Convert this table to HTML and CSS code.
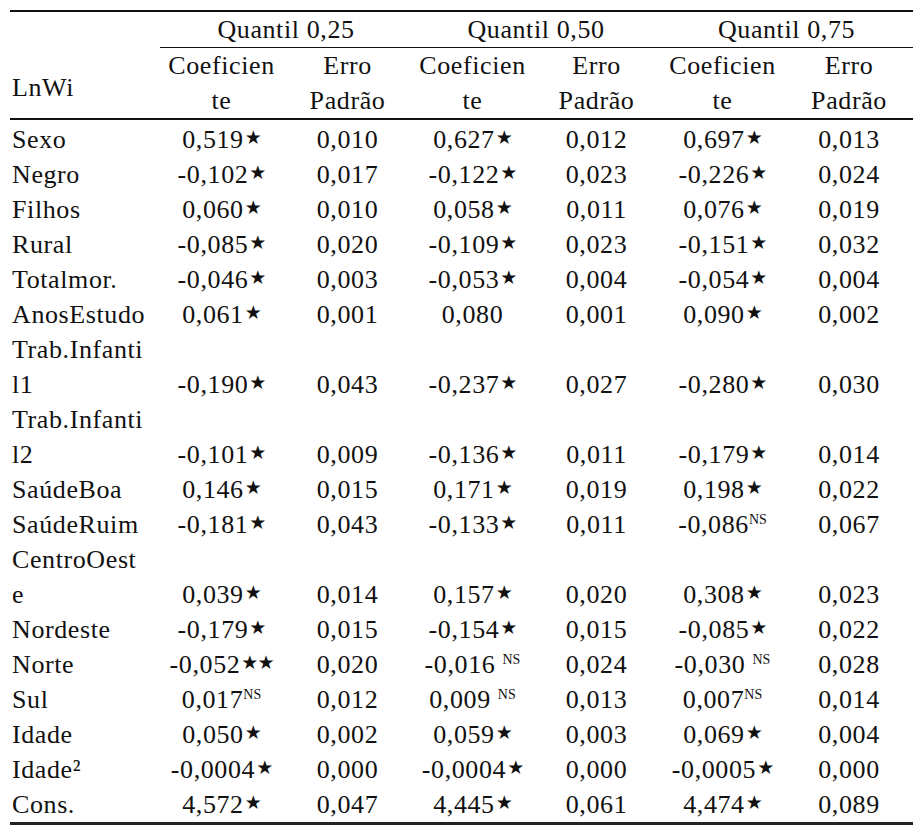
FILE: index.html
```html
<!DOCTYPE html>
<html lang="pt">
<head>
<meta charset="utf-8">
<title>Regressão quantílica</title>
<link rel="stylesheet" href="styles.css">
</head>
<body>
<table class="tbl">
  <colgroup>
    <col class="c-label"><col class="c1"><col class="c2"><col class="c3"><col class="c4"><col class="c5"><col class="c6">
  </colgroup>
  <thead>
    <tr class="h1">
      <th class="blank"></th>
      <th colspan="2" class="q">Quantil 0,25</th>
      <th colspan="2" class="q">Quantil 0,50</th>
      <th colspan="2" class="q">Quantil 0,75</th>
    </tr>
    <tr class="h2">
      <th class="lbl mid">LnWi</th>
      <th>Coeficien<br>te</th>
      <th>Erro<br>Padrão</th>
      <th>Coeficien<br>te</th>
      <th>Erro<br>Padrão</th>
      <th>Coeficien<br>te</th>
      <th>Erro<br>Padrão</th>
    </tr>
  </thead>
  <tbody>
    <tr class="first"><td class="lbl">Sexo</td><td>0,519<span class="st">★</span></td><td>0,010</td><td>0,627<span class="st">★</span></td><td>0,012</td><td>0,697<span class="st">★</span></td><td>0,013</td></tr>
    <tr><td class="lbl">Negro</td><td>-0,102<span class="st">★</span></td><td>0,017</td><td>-0,122<span class="st">★</span></td><td>0,023</td><td>-0,226<span class="st">★</span></td><td>0,024</td></tr>
    <tr><td class="lbl">Filhos</td><td>0,060<span class="st">★</span></td><td>0,010</td><td>0,058<span class="st">★</span></td><td>0,011</td><td>0,076<span class="st">★</span></td><td>0,019</td></tr>
    <tr><td class="lbl">Rural</td><td>-0,085<span class="st">★</span></td><td>0,020</td><td>-0,109<span class="st">★</span></td><td>0,023</td><td>-0,151<span class="st">★</span></td><td>0,032</td></tr>
    <tr><td class="lbl">Totalmor.</td><td>-0,046<span class="st">★</span></td><td>0,003</td><td>-0,053<span class="st">★</span></td><td>0,004</td><td>-0,054<span class="st">★</span></td><td>0,004</td></tr>
    <tr><td class="lbl">AnosEstudo</td><td>0,061<span class="st">★</span></td><td>0,001</td><td>0,080</td><td>0,001</td><td>0,090<span class="st">★</span></td><td>0,002</td></tr>
    <tr><td class="lbl">Trab.Infanti<br>l1</td><td>-0,190<span class="st">★</span></td><td>0,043</td><td>-0,237<span class="st">★</span></td><td>0,027</td><td>-0,280<span class="st">★</span></td><td>0,030</td></tr>
    <tr><td class="lbl">Trab.Infanti<br>l2</td><td>-0,101<span class="st">★</span></td><td>0,009</td><td>-0,136<span class="st">★</span></td><td>0,011</td><td>-0,179<span class="st">★</span></td><td>0,014</td></tr>
    <tr><td class="lbl">SaúdeBoa</td><td>0,146<span class="st">★</span></td><td>0,015</td><td>0,171<span class="st">★</span></td><td>0,019</td><td>0,198<span class="st">★</span></td><td>0,022</td></tr>
    <tr><td class="lbl">SaúdeRuim</td><td>-0,181<span class="st">★</span></td><td>0,043</td><td>-0,133<span class="st">★</span></td><td>0,011</td><td>-0,086<span class="ns">NS</span></td><td>0,067</td></tr>
    <tr><td class="lbl">CentroOest<br>e</td><td>0,039<span class="st">★</span></td><td>0,014</td><td>0,157<span class="st">★</span></td><td>0,020</td><td>0,308<span class="st">★</span></td><td>0,023</td></tr>
    <tr><td class="lbl">Nordeste</td><td>-0,179<span class="st">★</span></td><td>0,015</td><td>-0,154<span class="st">★</span></td><td>0,015</td><td>-0,085<span class="st">★</span></td><td>0,022</td></tr>
    <tr><td class="lbl">Norte</td><td>-0,052<span class="st">★★</span></td><td>0,020</td><td>-0,016 <span class="ns">NS</span></td><td>0,024</td><td>-0,030 <span class="ns">NS</span></td><td>0,028</td></tr>
    <tr><td class="lbl">Sul</td><td>0,017<span class="ns">NS</span></td><td>0,012</td><td>0,009 <span class="ns">NS</span></td><td>0,013</td><td>0,007<span class="ns">NS</span></td><td>0,014</td></tr>
    <tr><td class="lbl">Idade</td><td>0,050<span class="st">★</span></td><td>0,002</td><td>0,059<span class="st">★</span></td><td>0,003</td><td>0,069<span class="st">★</span></td><td>0,004</td></tr>
    <tr><td class="lbl">Idade²</td><td>-0,0004<span class="st">★</span></td><td>0,000</td><td>-0,0004<span class="st">★</span></td><td>0,000</td><td>-0,0005<span class="st">★</span></td><td>0,000</td></tr>
    <tr class="last"><td class="lbl">Cons.</td><td>4,572<span class="st">★</span></td><td>0,047</td><td>4,445<span class="st">★</span></td><td>0,061</td><td>4,474<span class="st">★</span></td><td>0,089</td></tr>
  </tbody>
</table>
</body>
</html>
```
FILE: styles.css
```css
html, body {
  margin: 0;
  padding: 0;
  background: #ffffff;
}

body {
  font-family: "Liberation Serif", "DejaVu Serif", serif;
  font-size: 26px;
  letter-spacing: 0.6px;
  color: #111111;
}

.tbl {
  border-collapse: collapse;
  table-layout: fixed;
  width: 903px;
  margin: 10px 0 0 10px;
  line-height: 35px;
}

.c-label { width: 150px; }
.c1 { width: 123px; }
.c2 { width: 129px; }
.c3 { width: 121px; }
.c4 { width: 127px; }
.c5 { width: 125px; }
.c6 { width: 128px; }

.tbl th,
.tbl td {
  padding: 0;
  height: 35px;
  font-weight: normal;
  text-align: center;
  vertical-align: bottom;
  white-space: nowrap;
}

.tbl .lbl {
  text-align: left;
  padding-left: 2px;
}

.tbl .mid {
  vertical-align: middle;
  padding-top: 10px;
}

.h1 th {
  border-top: 2px solid #111111;
}

.h1 th.q {
  border-bottom: 1.5px solid #111111;
}

.h2 th {
  border-bottom: 2px solid #111111;
}

.first td {
  padding-top: 2px;
}

.last td {
  border-bottom: 3px solid #222222;
}

.st {
  font-family: "DejaVu Sans", sans-serif;
  font-size: 19px;
  letter-spacing: -1px;
  line-height: 1;
  position: relative;
  top: -4px;
  margin-left: 1px;
}

.ns {
  font-size: 14px;
  letter-spacing: 0;
  line-height: 1;
  position: relative;
  top: -9px;
}
```
